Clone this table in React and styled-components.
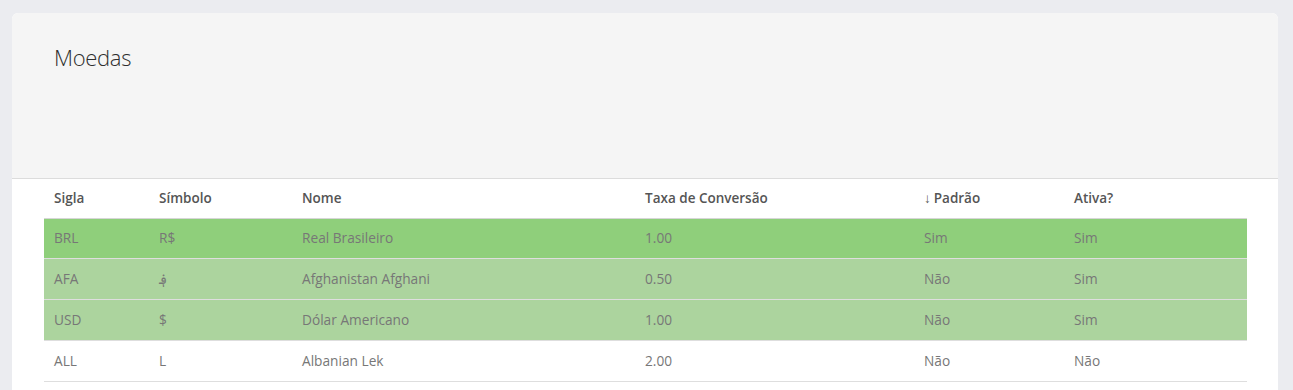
import React from "react";
import styled, { createGlobalStyle } from "styled-components";

const GlobalStyle = createGlobalStyle`
  body {
    margin: 0;
    background: #ebecf0;
    font-family: "Open Sans", "Liberation Sans", sans-serif;
  }
`;

const Page = styled.div`
  padding: 13px 15px 0 12px;
`;

const Card = styled.div`
  background: #ffffff;
  border-radius: 6px 6px 0 0;
  overflow: hidden;
  padding-bottom: 40px;
`;

const CardHeader = styled.div`
  background: #f5f5f5;
  border-bottom: 1px solid #dcdcdc;
  height: 166px;
  box-sizing: border-box;
  padding: 29px 42px;
`;

const Title = styled.h1`
  margin: 0;
  font-size: 22px;
  font-weight: 300;
  color: #2e2e2e;
  letter-spacing: -0.3px;
  line-height: 30px;
`;

const TableWrap = styled.div`
  padding: 0 31px 0 32px;
`;

const Table = styled.table`
  width: 100%;
  border-collapse: collapse;
  font-size: 13.7px;
  table-layout: fixed;
`;

const Th = styled.th`
  box-sizing: border-box;
  height: 39px;
  text-align: left;
  font-weight: 600;
  font-size: 13.5px;
  color: #555;
  padding: 0 10px;
  line-height: 20px;
  border-bottom: 1px solid #d6d6d6;
  width: ${(p) => p.$w}px;
`;

const Arrow = styled.span`
  font-weight: 400;
  margin-right: 3px;
`;

const Tbody = styled.tbody`
  tr:last-child td {
    border-bottom: 1px solid #dedede;
  }
  tr:first-child td {
    border-top: none;
  }
`;

const Tr = styled.tr`
  background: ${(p) =>
    p.$tone === "strong" ? "#8fcf7b" : p.$tone === "soft" ? "#acd49e" : "#fff"};
`;

const Td = styled.td`
  box-sizing: border-box;
  height: 40.8px;
  padding: 0 10px;
  line-height: 20px;
  color: #777;
  border-top: 1px solid #dedede;
  white-space: nowrap;
`;

const columns = [
  { label: "Sigla", w: 105 },
  { label: "Símbolo", w: 143 },
  { label: "Nome", w: 343 },
  { label: "Taxa de Conversão", w: 279 },
  { label: "Padrão", w: 150, sorted: true },
  { label: "Ativa?", w: 183 },
];

const rows = [
  { sigla: "BRL", simbolo: "R$", nome: "Real Brasileiro", taxa: "1.00", padrao: "Sim", ativa: "Sim", tone: "strong" },
  { sigla: "AFA", simbolo: "؋", nome: "Afghanistan Afghani", taxa: "0.50", padrao: "Não", ativa: "Sim", tone: "soft" },
  { sigla: "USD", simbolo: "$", nome: "Dólar Americano", taxa: "1.00", padrao: "Não", ativa: "Sim", tone: "soft" },
  { sigla: "ALL", simbolo: "L", nome: "Albanian Lek", taxa: "2.00", padrao: "Não", ativa: "Não", tone: "none" },
];

export default function App() {
  return (
    <>
      <GlobalStyle />
      <Page>
        <Card>
          <CardHeader>
            <Title>Moedas</Title>
          </CardHeader>
          <TableWrap>
            <Table>
              <thead>
                <tr>
                  {columns.map((c) => (
                    <Th key={c.label} $w={c.w}>
                      {c.sorted && <Arrow>↓</Arrow>}
                      {c.label}
                    </Th>
                  ))}
                </tr>
              </thead>
              <Tbody>
                {rows.map((r) => (
                  <Tr key={r.sigla} $tone={r.tone}>
                    {[r.sigla, r.simbolo, r.nome, r.taxa, r.padrao, r.ativa].map((v, j) => (
                      <Td key={j}>{v}</Td>
                    ))}
                  </Tr>
                ))}
              </Tbody>
            </Table>
          </TableWrap>
        </Card>
      </Page>
    </>
  );
}
